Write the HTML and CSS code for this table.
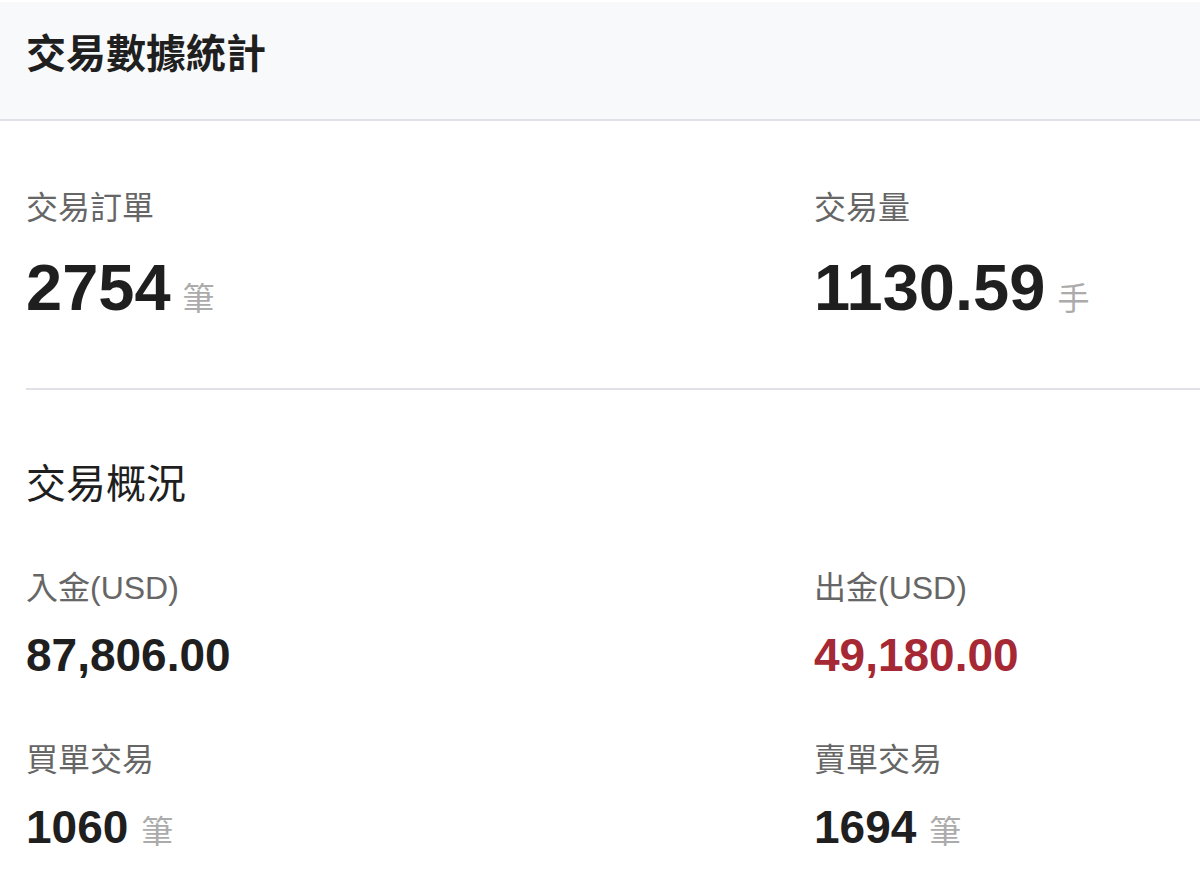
FILE: index.html
```html
<!DOCTYPE html>
<html lang="zh-Hant">
<head>
<meta charset="utf-8">
<title>交易數據統計</title>
<link rel="stylesheet" href="styles.css">
</head>
<body>
<div class="panel">
  <div class="panel-head">
    <h1 class="panel-title">交易數據統計</h1>
  </div>
  <div class="panel-body">
    <div class="stats">
      <div class="stat">
        <div class="label">交易訂單</div>
        <div class="big-value">2754<span class="unit">筆</span></div>
      </div>
      <div class="stat">
        <div class="label">交易量</div>
        <div class="big-value">1130.59<span class="unit">手</span></div>
      </div>
    </div>
    <div class="divider"></div>
    <h2 class="section-title">交易概況</h2>
    <div class="overview">
      <div class="item">
        <div class="label">入金(USD)</div>
        <div class="value">87,806.00</div>
      </div>
      <div class="item">
        <div class="label">出金(USD)</div>
        <div class="value value-red">49,180.00</div>
      </div>
      <div class="item">
        <div class="label">買單交易</div>
        <div class="value">1060<span class="unit unit-sm">筆</span></div>
      </div>
      <div class="item">
        <div class="label">賣單交易</div>
        <div class="value">1694<span class="unit unit-sm">筆</span></div>
      </div>
    </div>
  </div>
</div>
</body>
</html>
```
FILE: styles.css
```css
html, body {
  margin: 0;
  padding: 0;
  background: #ffffff;
}
body {
  font-family: "Liberation Sans", Arial, "Noto Sans CJK TC", sans-serif;
  color: #222222;
  overflow: hidden;
}
.panel {
  width: 1200px;
}
.panel-head {
  margin-top: 2px;
  height: 119px;
  box-sizing: border-box;
  padding: 32px 0 0 26px;
  background: #f8f9fb;
  border-bottom: 2px solid #e0e1e7;
}
.panel-title {
  margin: 0;
  font-size: 40px;
  line-height: 40px;
  font-weight: 700;
  color: #1f1f1f;
}
.panel-body {
  padding-left: 26px;
}
.stats {
  display: grid;
  grid-template-columns: 788px 1fr;
  padding-top: 71px;
}
.stat {
  display: flex;
  flex-direction: column;
  gap: 32px;
}
.label {
  font-size: 32px;
  line-height: 32px;
  color: #666666;
}
.big-value {
  font-size: 65px;
  line-height: 64px;
  font-weight: 700;
  color: #1f1f1f;
  white-space: nowrap;
}
.unit {
  font-size: 32px;
  line-height: 32px;
  font-weight: 400;
  color: #ababab;
  margin-left: 12px;
}
.divider {
  margin-top: 68px;
  height: 2px;
  background: #e0e1e7;
}
.section-title {
  margin: 74px 0 0 0;
  font-size: 40px;
  line-height: 40px;
  font-weight: 400;
  color: #1f1f1f;
}
.overview {
  display: grid;
  grid-template-columns: 788px 1fr;
  row-gap: 66px;
  margin-top: 68px;
}
.item {
  display: flex;
  flex-direction: column;
  gap: 29px;
}
.value {
  font-size: 46px;
  line-height: 45px;
  font-weight: 700;
  color: #1f1f1f;
  white-space: nowrap;
}
.value-red {
  color: #a52834;
}
.unit-sm {
  margin-left: 13px;
}
```
